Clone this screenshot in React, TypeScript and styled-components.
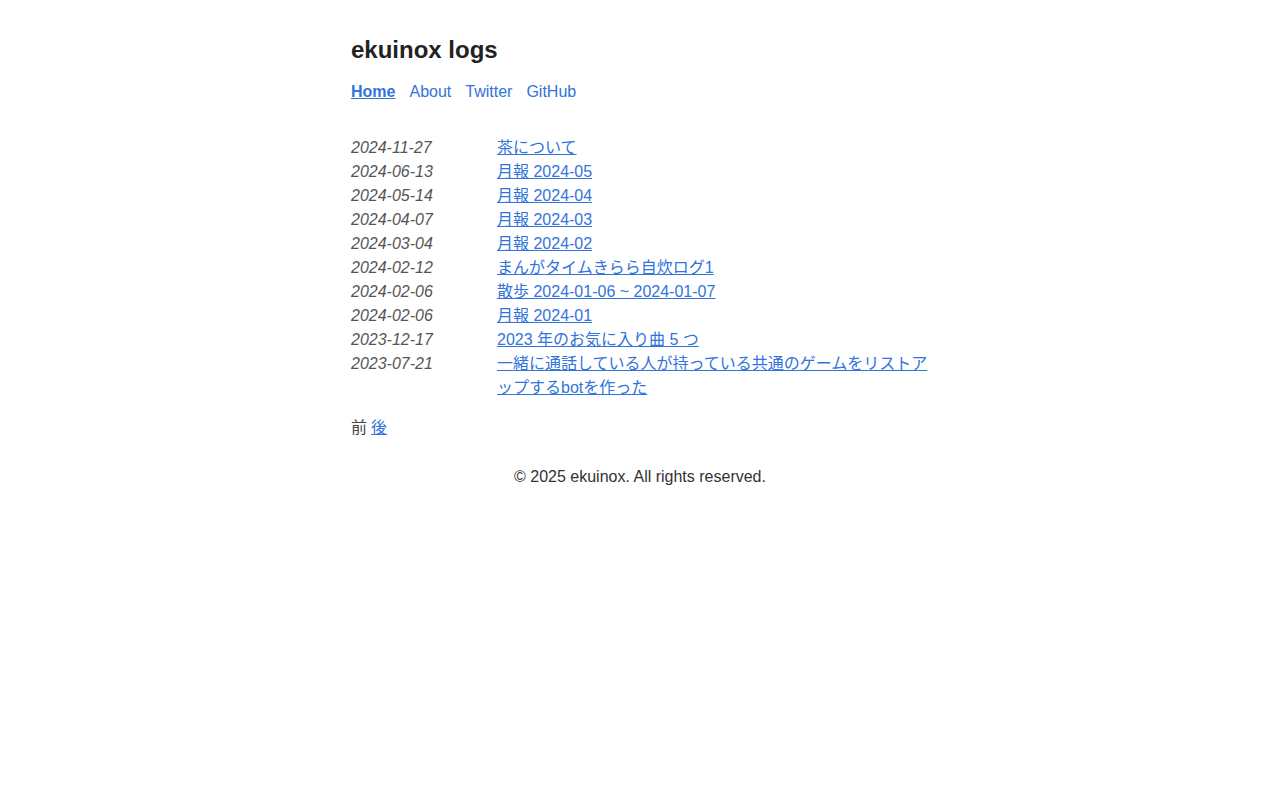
import React from 'react';
import styled, { createGlobalStyle } from 'styled-components';

const GlobalStyle = createGlobalStyle`
  body {
    margin: 0;
    background: #fff;
    color: #333;
    font-family: "Liberation Sans", Arial, "Noto Sans CJK JP", sans-serif;
    font-size: 16px;
    line-height: 24px;
  }
`;

const Page = styled.div`
  width: 578px;
  margin: 0 auto;
  padding-top: 34px;
`;

const Title = styled.h1`
  font-size: 24px;
  line-height: 32px;
  font-weight: 700;
  color: #222;
  margin: 0 0 14px 0;
`;

const Nav = styled.nav`
  display: flex;
  gap: 14px;
  margin-bottom: 32px;
`;

const NavLink = styled.a<{ $active?: boolean }>`
  color: #3273dc;
  text-decoration: ${p => (p.$active ? 'underline' : 'none')};
  font-weight: ${p => (p.$active ? 700 : 400)};
`;

const PostList = styled.ul`
  list-style: none;
  margin: 0;
  padding: 0;
`;

const PostRow = styled.li`
  display: grid;
  grid-template-columns: 146px 1fr;
`;

const PostDate = styled.time`
  font-style: italic;
  color: #555;
`;

const PostLink = styled.a`
  color: #3273dc;
  text-decoration: underline;
`;

const Pager = styled.div`
  margin-top: 16px;
  display: flex;
  gap: 4px;
  color: #444;
`;

const Footer = styled.footer`
  text-align: center;
  margin-top: 25px;
  width: 1280px;
  margin-left: calc((578px - 1280px) / 2);
  color: #333;
`;

const posts = [
  ['2024-11-27', '茶について'],
  ['2024-06-13', '月報 2024-05'],
  ['2024-05-14', '月報 2024-04'],
  ['2024-04-07', '月報 2024-03'],
  ['2024-03-04', '月報 2024-02'],
  ['2024-02-12', 'まんがタイムきらら自炊ログ1'],
  ['2024-02-06', '散歩 2024-01-06 ~ 2024-01-07'],
  ['2024-02-06', '月報 2024-01'],
  ['2023-12-17', '2023 年のお気に入り曲 5 つ'],
  ['2023-07-21', '一緒に通話している人が持っている共通のゲームをリストアップするbotを作った'],
];

const App: React.FC = () => (
  <>
    <GlobalStyle />
    <Page>
      <Title>ekuinox logs</Title>
      <Nav>
        <NavLink href="#" $active>Home</NavLink>
        <NavLink href="#">About</NavLink>
        <NavLink href="#">Twitter</NavLink>
        <NavLink href="#">GitHub</NavLink>
      </Nav>
      <PostList>
        {posts.map(([date, title], i) => (
          <PostRow key={i}>
            <PostDate>{date}</PostDate>
            <PostLink href="#">{title}</PostLink>
          </PostRow>
        ))}
      </PostList>
      <Pager>
        <span>前</span>
        <PostLink href="#">後</PostLink>
      </Pager>
      <Footer>© 2025 ekuinox. All rights reserved.</Footer>
    </Page>
  </>
);

export default App;
